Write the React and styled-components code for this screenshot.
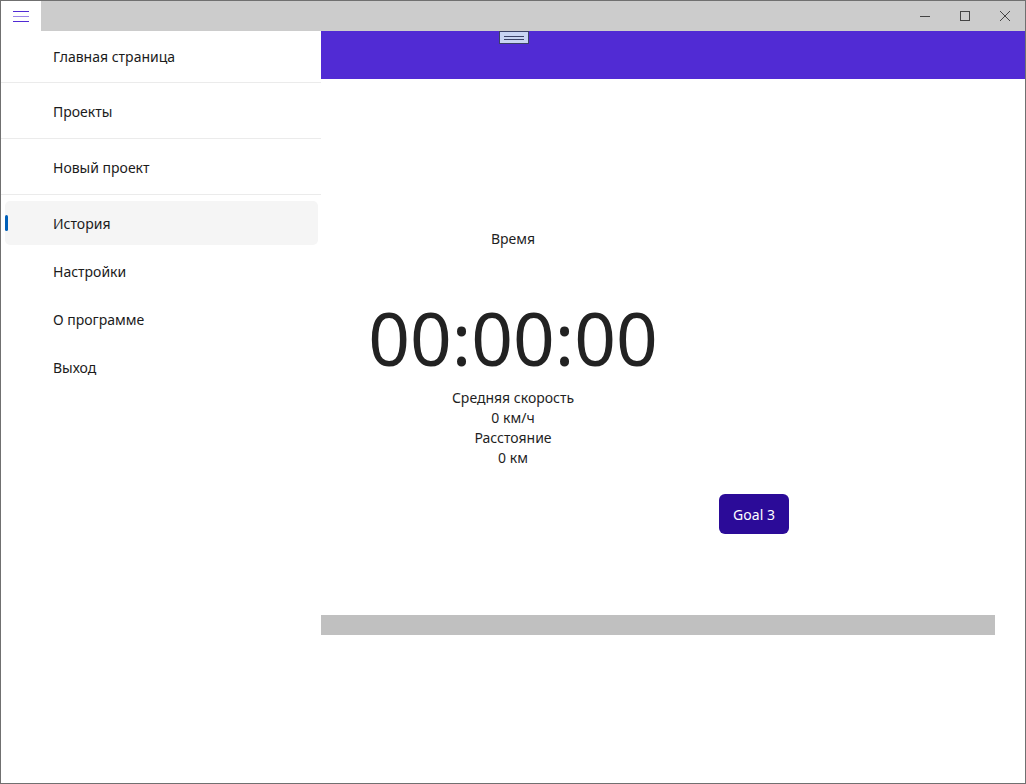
import React from "react";
import styled, { createGlobalStyle } from "styled-components";

const GlobalStyle = createGlobalStyle`
  html, body {
    margin: 0;
    padding: 0;
    background: #ffffff;
  }
  body {
    font-family: "Noto Sans", "Open Sans", sans-serif;
    color: #1b1b1b;
  }
`;

const Window = styled.div`
  width: 1026px;
  height: 784px;
  box-sizing: border-box;
  border: 1px solid #707070;
  display: flex;
  flex-direction: column;
  background: #ffffff;
  overflow: hidden;
`;

const TitleBar = styled.div`
  height: 30px;
  display: flex;
  align-items: stretch;
  background: #cccccc;
  flex-shrink: 0;
`;

const MenuButton = styled.button`
  width: 40px;
  border: none;
  padding: 0;
  background: #ffffff;
  display: flex;
  flex-direction: column;
  align-items: center;
  justify-content: center;
  gap: 4px;
`;

const MenuLine = styled.span`
  display: block;
  width: 16px;
  height: 1px;
  background: ${(p) => (p.$light ? "#9c86e8" : "#512bd4")};
`;

const TitleSpacer = styled.div`
  flex: 1;
`;

const Controls = styled.div`
  display: flex;
  align-items: center;
`;

const ControlButton = styled.div`
  width: 40px;
  height: 30px;
  display: flex;
  align-items: center;
  justify-content: center;
`;

const Body = styled.div`
  position: relative;
  flex: 1;
  display: flex;
  flex-direction: column;
`;

const Header = styled.div`
  position: relative;
  height: 48px;
  background: #512bd4;
  flex-shrink: 0;
`;

const Grip = styled.div`
  position: absolute;
  top: 0;
  left: 498px;
  width: 28px;
  height: 11px;
  background: #c9d5f2;
  border: 1px solid #3b4266;
  display: flex;
  flex-direction: column;
  align-items: center;
  justify-content: center;
  gap: 2px;
`;

const GripLine = styled.span`
  display: block;
  width: 20px;
  height: 1px;
  background: #3b4266;
`;

const Content = styled.div`
  display: flex;
  flex-direction: column;
  align-items: center;
  padding-top: 150px;
`;

const Label = styled.div`
  font-size: 14px;
  line-height: 20px;
  text-align: center;
  color: #1f1f1f;
`;

const Timer = styled.div`
  margin-top: 53px;
  font-size: 73px;
  line-height: 72px;
  font-weight: 400;
  color: #222222;
`;

const Stats = styled.div`
  margin-top: 14px;
  display: flex;
  flex-direction: column;
  align-items: center;
`;

const ButtonRow = styled.div`
  align-self: stretch;
  margin-top: 26px;
  padding-left: 718px;
`;

const GoalButton = styled.button`
  width: 70px;
  height: 40px;
  border: none;
  border-radius: 6px;
  background: #2b0b98;
  color: #ffffff;
  font-family: "Noto Sans", "Open Sans", sans-serif;
  font-size: 14px;
  padding: 0;
`;

const Bar = styled.div`
  align-self: stretch;
  margin: 81px 30px 0 0;
  height: 20px;
  background: #c0c0c0;
`;

const Flyout = styled.nav`
  position: absolute;
  top: 0;
  left: 0;
  bottom: 0;
  width: 320px;
  background: #ffffff;
  display: flex;
  flex-direction: column;
`;

const TopItem = styled.div`
  height: ${(p) => p.$h}px;
  display: flex;
  align-items: center;
  padding-left: 52px;
  padding-top: ${(p) => p.$pt}px;
  box-sizing: border-box;
  font-size: 14px;
  color: #1b1b1b;
  border-bottom: 1px solid #ebebeb;
`;

const NavList = styled.div`
  padding-top: 4px;
  display: flex;
  flex-direction: column;
`;

const NavItem = styled.div`
  position: relative;
  height: 44px;
  margin: 2px 3px 2px 4px;
  border-radius: 5px;
  display: flex;
  align-items: center;
  padding-left: 48px;
  font-size: 14px;
  color: #1b1b1b;
  background: ${(p) => (p.$active ? "#f5f5f5" : "transparent")};
`;

const Indicator = styled.span`
  position: absolute;
  left: 0;
  top: 14px;
  width: 3px;
  height: 16px;
  border-radius: 2px;
  background: #005fb8;
`;

const topItems = [
  { label: "Главная страница", h: 52, pt: 0 },
  { label: "Проекты", h: 56, pt: 2 },
  { label: "Новый проект", h: 56, pt: 2 },
];

const navItems = ["История", "Настройки", "О программе", "Выход"];

export default function App() {
  return (
    <>
      <GlobalStyle />
      <Window>
        <TitleBar>
          <MenuButton>
            <MenuLine />
            <MenuLine $light />
            <MenuLine />
          </MenuButton>
          <TitleSpacer />
          <Controls>
            <ControlButton>
              <svg width="12" height="12" viewBox="0 0 12 12">
                <path d="M1 6.5h10" stroke="#444" strokeWidth="1" />
              </svg>
            </ControlButton>
            <ControlButton>
              <svg width="12" height="12" viewBox="0 0 12 12">
                <rect x="1.5" y="1.5" width="9" height="9" fill="none" stroke="#444" strokeWidth="1" />
              </svg>
            </ControlButton>
            <ControlButton>
              <svg width="12" height="12" viewBox="0 0 12 12">
                <path d="M1 1l10 10M11 1L1 11" stroke="#444" strokeWidth="1" />
              </svg>
            </ControlButton>
          </Controls>
        </TitleBar>
        <Body>
          <Header>
            <Grip>
              <GripLine />
              <GripLine />
            </Grip>
          </Header>
          <Content>
            <Label>Время</Label>
            <Timer>00:00:00</Timer>
            <Stats>
              <Label>Средняя скорость</Label>
              <Label>0 км/ч</Label>
              <Label>Расстояние</Label>
              <Label>0 км</Label>
            </Stats>
            <ButtonRow>
              <GoalButton>Goal 3</GoalButton>
            </ButtonRow>
            <Bar />
          </Content>
          <Flyout>
            {topItems.map((it) => (
              <TopItem key={it.label} $h={it.h} $pt={it.pt}>
                {it.label}
              </TopItem>
            ))}
            <NavList>
              {navItems.map((label, i) => (
                <NavItem key={label} $active={i === 0}>
                  {i === 0 && <Indicator />}
                  {label}
                </NavItem>
              ))}
            </NavList>
          </Flyout>
        </Body>
      </Window>
    </>
  );
}
